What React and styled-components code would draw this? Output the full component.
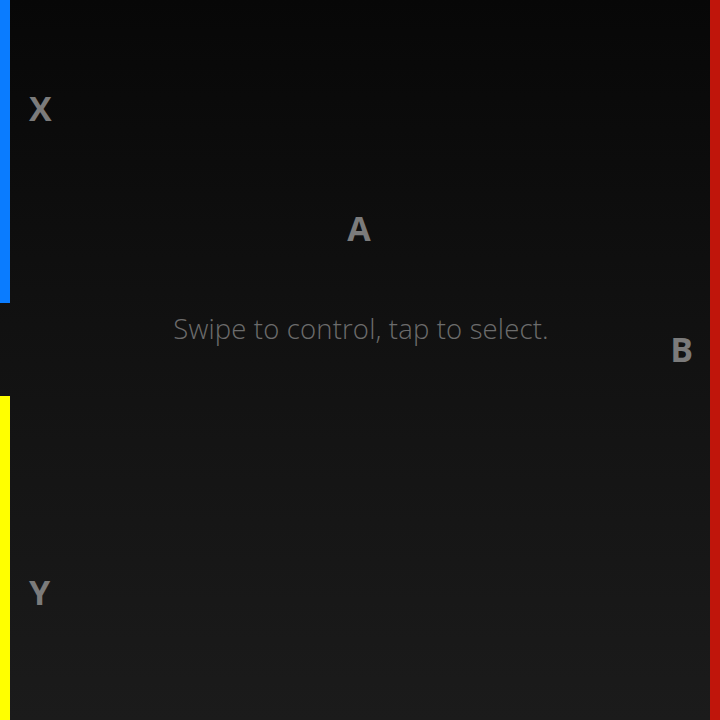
import React from 'react';
import styled, { createGlobalStyle } from 'styled-components';

const GlobalStyle = createGlobalStyle`
  html, body {
    margin: 0;
    padding: 0;
    background: #0b0b0b;
  }
  body {
    font-family: 'Open Sans', 'Noto Sans', sans-serif;
  }
`;

const Screen = styled.div`
  display: flex;
  width: 720px;
  height: 720px;
  overflow: hidden;
  background: linear-gradient(180deg, #070707 0%, #111111 45%, #1b1b1b 100%);
`;

const LeftRail = styled.div`
  width: 10px;
  display: flex;
  flex-direction: column;
  justify-content: space-between;
`;

const RailStripe = styled.div`
  width: 10px;
  height: ${(p) => p.$h}px;
  background: ${(p) => p.$color};
`;

const RightRail = styled.div`
  width: 10px;
  background: #c0150b;
`;

const Board = styled.div`
  flex: 1;
  display: grid;
  grid-template-columns: 1fr auto 1fr;
  grid-template-rows: auto auto auto 1fr;
  padding: 0 17px 0 19px;
`;

const Key = styled.div`
  grid-column: ${(p) => p.$col};
  grid-row: ${(p) => p.$row};
  justify-self: ${(p) => p.$justify || 'center'};
  align-self: start;
  margin-top: ${(p) => p.$top}px;
  margin-right: ${(p) => p.$nudge || 0}px;
  font-size: 34px;
  line-height: 1;
  font-weight: 700;
  color: #7b7b7b;
`;

const Hint = styled.div`
  grid-column: 2;
  grid-row: 3;
  align-self: start;
  margin-top: 70px;
  font-size: 27.5px;
  letter-spacing: 0.15px;
  line-height: 1;
  font-weight: 300;
  color: #6c6c6c;
  white-space: nowrap;
`;

export default function App() {
  return (
    <>
      <GlobalStyle />
      <Screen>
        <LeftRail>
          <RailStripe $h={303} $color="#0a7cff" />
          <RailStripe $h={324} $color="#ffff00" />
        </LeftRail>
        <Board>
          <Key $col={1} $row={1} $justify="start" $top={91}>X</Key>
          <Key $col={2} $row={2} $top={86} $nudge={4}>A</Key>
          <Hint>Swipe to control, tap to select.</Hint>
          <Key $col={3} $row={3} $justify="end" $top={87}>B</Key>
          <Key $col={1} $row={4} $justify="start" $top={209}>Y</Key>
        </Board>
        <RightRail />
      </Screen>
    </>
  );
}
